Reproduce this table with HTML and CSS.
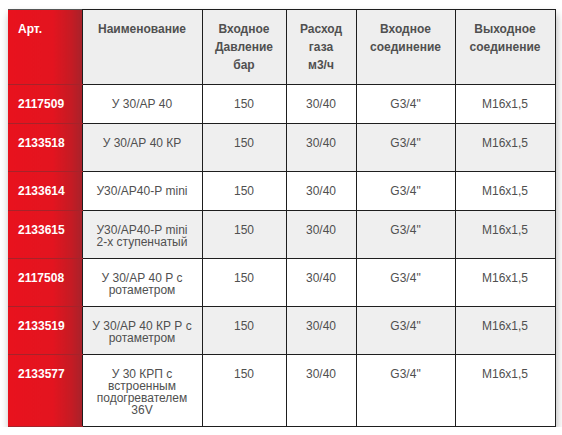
FILE: index.html
```html
<!DOCTYPE html>
<html lang="ru">
<head>
<meta charset="utf-8">
<title>Редукторы</title>
<link rel="stylesheet" href="styles.css">
</head>
<body>
<table class="spec">
  <colgroup>
    <col class="c-art"><col class="c-name"><col class="c-press"><col class="c-flow"><col class="c-in"><col class="c-out">
  </colgroup>
  <thead>
    <tr class="r-head">
      <th class="art">Арт.</th>
      <th>Наименование</th>
      <th>Входное Давление бар</th>
      <th class="flow">Расход газа <span class="nw">м3/ч</span></th>
      <th>Входное соединение</th>
      <th>Выходное соединение</th>
    </tr>
  </thead>
  <tbody>
    <tr class="r-s">
      <td class="art">2117509</td><td>У 30/АР 40</td><td>150</td><td>30/40</td><td>G3/4"</td><td>M16x1,5</td>
    </tr>
    <tr class="r-m alt">
      <td class="art">2133518</td><td>У 30/АР 40 КР</td><td>150</td><td>30/40</td><td>G3/4"</td><td>M16x1,5</td>
    </tr>
    <tr class="r-s">
      <td class="art">2133614</td><td>У30/АР40-Р mini</td><td>150</td><td>30/40</td><td>G3/4"</td><td>M16x1,5</td>
    </tr>
    <tr class="r-m alt">
      <td class="art">2133615</td><td>У30/АР40-Р mini 2&#8209;х ступенчатый</td><td>150</td><td>30/40</td><td>G3/4"</td><td>M16x1,5</td>
    </tr>
    <tr class="r-m">
      <td class="art">2117508</td><td>У 30/АР 40 Р с ротаметром</td><td>150</td><td>30/40</td><td>G3/4"</td><td>M16x1,5</td>
    </tr>
    <tr class="r-m alt">
      <td class="art">2133519</td><td>У 30/АР 40 КР Р с ротаметром</td><td>150</td><td>30/40</td><td>G3/4"</td><td>M16x1,5</td>
    </tr>
    <tr class="r-l">
      <td class="art">2133577</td><td>У 30 КРП с встроенным подогревателем 36V</td><td>150</td><td>30/40</td><td>G3/4"</td><td>M16x1,5</td>
    </tr>
  </tbody>
</table>
</body>
</html>
```

FILE: styles.css
```css
html, body {
  margin: 0;
  padding: 0;
  background: #ffffff;
}
body {
  padding: 9px 8px 0 8px;
  font-family: "Liberation Sans", Arial, sans-serif;
  font-size: 12px;
  color: #505050;
}
.spec {
  border-collapse: collapse;
  table-layout: fixed;
  width: 547px;
  box-shadow: 1px 5px 8px rgba(0, 0, 0, 0.28);
  border-top: 1px solid #555555;
}
.c-art { width: 74px; }
.c-name { width: 120px; }
.c-press { width: 84px; }
.c-flow { width: 70px; }
.c-in { width: 99px; }
.c-out { width: 100px; }

.spec th,
.spec td {
  border: 1px solid #1e1e1e;
  text-align: center;
  vertical-align: top;
  padding: 0 7px;
}
.spec th {
  background: #eeeeee;
  font-weight: bold;
  line-height: 18px;
  padding-top: 10px;
  color: #505050;
}
.spec th.flow {
  padding: 10px 9px 0 9px;
}
.nw {
  white-space: nowrap;
}
.spec td {
  line-height: 12px;
  padding-top: 13px;
  background: #ffffff;
}
.spec tr.alt td {
  background: #efefef;
}
.spec .art,
.spec tr.alt td.art {
  background: linear-gradient(to right, #e8121d 0%, #e3141f 60%, #c41b24 86%, #a8222a 100%);
  color: #ffffff;
  font-weight: bold;
  text-align: left;
  padding-left: 10px;
  border-left: 0;
  border-top-color: #a6232a;
  border-bottom-color: #a6232a;
}
.spec th.art {
  border-top-color: #555555;
}
.r-head { height: 75px; }
.r-s { height: 39px; }
.r-m { height: 48px; }
.r-l { height: 72px; }
```
